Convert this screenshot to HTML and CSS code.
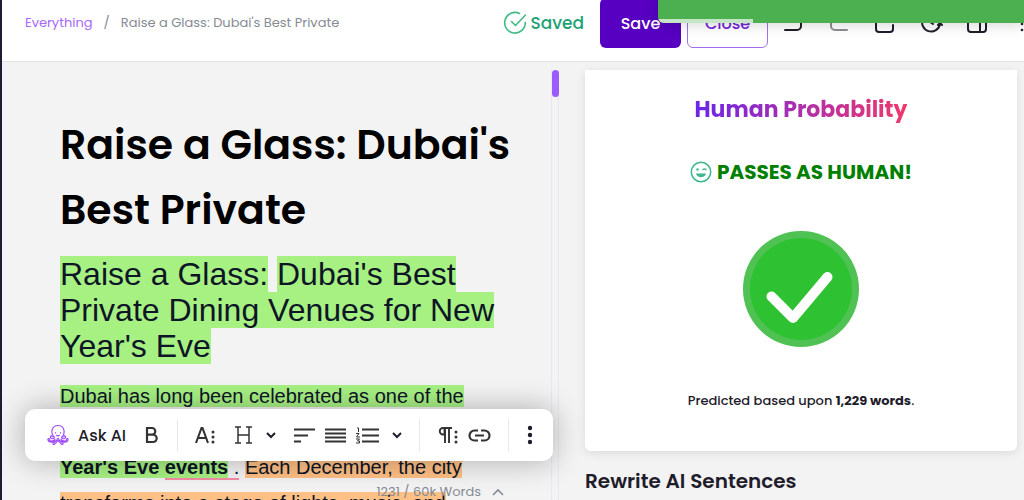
FILE: index.html
```html
<!DOCTYPE html>
<html lang="en">
<head>
    <meta charset="UTF-8">
    <meta name="viewport" content="width=device-width, initial-scale=1.0">
    <title>Raise a Glass: Dubai's Best Private</title>
    <link rel="stylesheet" href="styles.css">
</head>
<body>
    <div class="app">
        <header class="topbar">
            <nav class="breadcrumb">
                <a href="#">Everything</a>
                <span class="slash">/</span>
                <span>Raise a Glass: Dubai's Best Private</span>
            </nav>
            <div class="actions">
                <div class="saved">
                    <svg width="24" height="24" viewBox="0 0 24 24" fill="none" stroke="#3dbb83" stroke-width="1.6" stroke-linecap="round" stroke-linejoin="round">
                        <path d="M16.500 2.500A10.300 10.300 0 1 0 22.300 11.500"/>
                        <path d="M8.500 10.500l4 4L22.500 4"/>
                    </svg>
                    <span>Saved</span>
                </div>
                <button class="btn btn-save">Save</button>
                <button class="btn btn-close">Close</button>
            </div>
            <div class="tools">
                <button aria-label="Undo"><svg width="24" height="24" viewBox="0 0 24 24" class="line"><path d="M7 3L3 6l4 3M3 6h13a4 4 0 0 1 4 4v5a4 4 0 0 1-4 4H4"/></svg></button>
                <button aria-label="Redo" class="off"><svg width="24" height="24" viewBox="0 0 24 24" class="line"><path d="M17 3l4 3-4 3M21 6H8a4 4 0 0 0-4 4v5a4 4 0 0 0 4 4h12"/></svg></button>
                <button aria-label="Export"><svg width="24" height="24" viewBox="0 0 24 24" class="line"><path d="M12 8V2M9 5l3-3 3 3M3 12v6a3 3 0 0 0 3 3h11a3 3 0 0 0 3-3v-4"/></svg></button>
                <button aria-label="History"><svg width="24" height="24" viewBox="0 0 24 24" class="line"><path d="M21 13A9 9 0 1 1 17 4M11 6v5l3 2M19 14l2-2 2 2"/></svg></button>
                <button aria-label="Sidebar"><svg width="24" height="24" viewBox="0 0 24 24" class="line"><rect x="3" y="3" width="18" height="18" rx="3"/><path d="M15 3v18"/></svg></button>
                <button aria-label="More"><svg width="24" height="24" viewBox="0 0 24 24" fill="#1f1d2b"><circle cx="11" cy="5" r="1.300"/><circle cx="11" cy="13" r="1.300"/><circle cx="11" cy="19" r="1.300"/></svg></button>
            </div>
        </header>

        <main class="content">
            <section class="editor">
                <article class="document">
                    <h1>Raise a Glass: Dubai's Best Private</h1>
                    <h2><mark>Raise a Glass:</mark> <mark>Dubai's Best Private Dining Venues for New Year's Eve</mark></h2>
                    <p><mark>Dubai has long been celebrated as one of the</mark></p>
                    <p>
                        <mark><b>Year's Eve </b></mark><span class="grammar"><mark><b>events</b></mark> .</span> <mark class="orange">Each December, the city</mark><br>
                        <mark class="orange">transforms into a stage of lights, music, and</mark>
                    </p>
                </article>
                <div class="scroll"><div class="thumb"></div></div>

                <div class="word-count">
                    <span>1231 / 60k Words</span>
                    <svg width="12" height="8" viewBox="0 0 12 8" fill="none" stroke="#858b93" stroke-width="1.6"><path d="M1 7l5-5 5 5"/></svg>
                </div>

                <div class="toolbar">
                    <div class="group wide">
                        <button class="ask">
                            <svg width="22" height="22" viewBox="0 0 22 22" fill="none" stroke="#a14dfb" stroke-width="1.2" stroke-linecap="round" stroke-linejoin="round">
                                <path d="M7.500 13.500C3 9 4.500 1.500 11 1.500S19 9 14.500 13.500"/>
                                <path d="M7.500 13.500c-1 2-4.500 1.500-4-.7.300-1.300 2-1 1.700.2M14.500 13.500c1 2 4.500 1.500 4-.7-.3-1.300-2-1-1.700.2"/>
                                <path d="M8 15.500c-2 2-5.500 2-5.500 0 0-1.500-2-1-1.500.5C2 19 6 18.500 8 17M14 15.500c2 2 5.500 2 5.500 0 0-1.500 2-1 1.500.5-1 3-5 2.500-7 1"/>
                                <path d="M10.500 14.500c0 3-4 3-4.500 4.700-.3 1.500 1.500 1.700 2 .5l3-3 3 3c.500 1.200 2.300 1 2-.5-.5-1.700-4.500-1.700-4.500-4.700"/>
                                <path d="M8.500 8.500v.4M13.500 8.500v.4M9.500 11.300q1.500 1.200 3 0"/>
                            </svg>
                            <span>Ask AI</span>
                        </button>
                        <button aria-label="Bold"><svg width="14" height="18" viewBox="0 0 14 18" fill="none" stroke="#333" stroke-width="2.200"><path d="M2 2h5a3.300 3.300 0 0 1 0 6.600H2zM2 8.600h6a3.700 3.700 0 0 1 0 7.400H2z"/></svg></button>
                    </div>
                    <span class="divider"></span>
                    <div class="group wide">
                        <button aria-label="Text style"><svg width="20" height="18" viewBox="0 0 20 18" fill="none" stroke="#333" stroke-width="2.100"><path d="M1 17L6.500 2h1L13 17M3.500 12h7"/><path stroke-width="3" stroke-linecap="round" d="M18 6v0M18 11v0M18 16v0"/></svg></button>
                        <button aria-label="Heading" class="pick"><svg width="19" height="18" viewBox="0 0 19 18" fill="none" stroke="#333" stroke-width="1.500"><path d="M4 1v16M15 1v16M4 9h11M1 1h6M12 1h6M1 17h6M12 17h6"/></svg><svg width="10" height="7" viewBox="0 0 10 7" class="chevron"><path d="M1 1l4 4 4-4"/></svg></button>
                    </div>
                    <div class="group lists">
                        <button aria-label="Align"><svg width="21" height="15" viewBox="0 0 21 15" class="bars"><path d="M0 1.500h21M0 7.500h14M0 13.500h7"/></svg></button>
                        <button aria-label="Justify"><svg width="21" height="15" viewBox="0 0 21 15" class="bars"><path d="M0 1.500h21M0 5.500h21M0 9.500h21M0 13.500h21"/></svg></button>
                        <button aria-label="List" class="pick"><svg width="23" height="17" viewBox="0 0 23 17" class="bars"><path d="M6 2.500h17M6 8.500h17M6 14.500h17"/><path stroke-width="1" d="M1 1h1.500v4M0 6.500h3L.5 10H4M0 12h3.500l-2 2h2v2H0"/></svg><svg width="10" height="7" viewBox="0 0 10 7" class="chevron"><path d="M1 1l4 4 4-4"/></svg></button>
                    </div>
                    <span class="divider"></span>
                    <div class="group">
                        <button aria-label="Paragraph"><svg width="20" height="18" viewBox="0 0 20 18" fill="none" stroke="#333" stroke-width="1.900"><path d="M5 2a3.200 3.200 0 0 0 0 6.500h1.500V2z"/><path d="M5 2h9M7 2v15M11 2v15"/><path stroke-width="3" stroke-linecap="round" d="M18 6v0M18 11v0M18 16v0"/></svg></button>
                        <button aria-label="Link"><svg width="23" height="13" viewBox="0 0 23 13" fill="none" stroke="#333" stroke-width="2.200"><path d="M10 1.500H6.500a5 5 0 0 0 0 10H10M13 1.500h3.500a5 5 0 0 1 0 10H13M7 6.500h9"/></svg></button>
                    </div>
                    <span class="divider"></span>
                    <button aria-label="More options"><svg width="6" height="20" viewBox="0 0 6 20" fill="#1f1d2b"><circle cx="3" cy="3" r="2.200"/><circle cx="3" cy="10" r="2.200"/><circle cx="3" cy="17" r="2.200"/></svg></button>
                </div>
            </section>

            <aside class="panel">
                <div class="card">
                    <h3 class="card-title">Human Probability</h3>
                    <div class="result">
                        <svg width="22" height="22" viewBox="0 0 22 22" fill="none" stroke="#3bb78f" stroke-width="1.500" stroke-linecap="round">
                            <circle cx="11" cy="11" r="9.700"/>
                            <path d="M13 8.500q1.500-1.200 3 0"/>
                            <circle cx="7.500" cy="8.500" r="1.200" fill="#3bb78f" stroke="none"/>
                            <path d="M6 12.500h10c-1 5-9 5-10 0z" fill="#3bb78f" stroke="none"/>
                        </svg>
                        <span>PASSES AS HUMAN!</span>
                    </div>
                    <svg class="check" width="116" height="116" viewBox="0 0 116 116">
                        <circle cx="58" cy="58" r="58" fill="#50c153"/>
                        <circle cx="58" cy="58" r="51" fill="#2ec232"/>
                        <path d="M28.500 65.500L50 87L84.500 46" fill="none" stroke="#fff" stroke-width="10" stroke-linecap="round" stroke-linejoin="round"/>
                    </svg>
                    <p class="predicted">Predicted based upon <b>1,229 words</b>.</p>
                </div>
                <h3 class="rewrite">Rewrite AI Sentences</h3>
            </aside>
        </main>

        <div class="toast"><div class="progress"></div></div>
    </div>
</body>
</html>
```
FILE: styles.css
```css
*{
    margin: 0;
    padding: 0;
    box-sizing: border-box;
}

body{
    font-family: Poppins, Inter, sans-serif;
    color: #1f1d2b;
    background: #f3f3f3;
}

button{
    font-family: inherit;
    color: inherit;
    border: none;
    background: none;
    display: flex;
    align-items: center;
}

.app{
    position: relative;
    height: 100vh;
    overflow: hidden;
    border-left: 2px solid #211a33;
    display: flex;
    flex-direction: column;
}

.topbar{
    flex: none;
    height: 62px;
    padding: 0 0 15px 23px;
    background: #fff;
    border-bottom: 1px solid #e2e2e4;
    display: flex;
    align-items: center;
}

.breadcrumb{
    display: flex;
    flex: 1;
    font-size: 13px;
    color: #858b93;
    white-space: nowrap;
}

.breadcrumb a{
    color: #a768fb;
    text-decoration: none;
}

.slash{
    margin: 0 11px;
}

.actions{
    display: flex;
    align-items: center;
    gap: 6px;
}

.saved{
    display: flex;
    align-items: center;
    gap: 3px;
    margin-right: 10px;
    font-size: 17px;
    font-weight: 500;
    color: #20a274;
}

.btn{
    width: 81px;
    height: 50px;
    justify-content: center;
    border-radius: 6px;
    font-size: 16px;
    font-weight: 500;
}

.btn-save{
    background: #5700c2;
    color: #fff;
}

.btn-close{
    border: 1px solid #a070ee;
    color: #7526dc;
}

.tools{
    display: flex;
    gap: 22px;
    margin: 0 -11px 0 13px;
}

.off{
    opacity: 0.5;
}

.line{
    fill: none;
    stroke: #1f1d2b;
    stroke-width: 2;
    stroke-linecap: round;
    stroke-linejoin: round;
}

.content{
    flex: 1;
    min-height: 0;
    display: flex;
}

.editor{
    position: relative;
    width: 54.5%;
    display: flex;
    justify-content: space-between;
}

.document{
    flex: 1;
    padding: 50px 40px 0 58px;
}

h1{
    font-size: 41px;
    line-height: 65px;
    font-weight: 600;
    color: #000;
}

h2{
    margin-top: 14px;
    font-family: "Liberation Sans", Arial, sans-serif;
    font-size: 32px;
    line-height: 36px;
    font-weight: 400;
    color: #0d1526;
}

.document p{
    margin-top: 14px;
    font-family: "Liberation Sans", Arial, sans-serif;
    font-size: 20px;
    line-height: 36px;
    color: #0d1526;
    white-space: nowrap;
}

.document p + p{
    margin-top: 35px;
}

mark{
    background: #a7f183;
    color: inherit;
}

.orange{
    background: #ffc085;
}

.grammar{
    border-bottom: 2px solid #f58ca6;
}

.scroll{
    width: 8px;
    margin-top: 8px;
    border: 1px solid #e9e7f0;
    border-width: 0 1px;
}

.thumb{
    width: 7px;
    height: 27px;
    border-radius: 4px;
    background: #9b5cff;
}

.word-count{
    position: absolute;
    right: 55px;
    bottom: 0;
    display: flex;
    align-items: center;
    gap: 11px;
    font-size: 13px;
    line-height: 16px;
    color: #858b93;
}

.toolbar{
    position: absolute;
    left: 23px;
    right: 6px;
    bottom: 39px;
    height: 52px;
    padding: 0 20px 0 22px;
    border-radius: 10px;
    background: #fff;
    box-shadow: 0 0 30px rgba(0, 0, 0, 0.3);
    display: flex;
    align-items: center;
    justify-content: space-between;
}

.group{
    display: flex;
    align-items: center;
    gap: 10px;
}

.wide{
    gap: 19px;
}

.ask{
    gap: 9px;
    font-size: 16px;
    font-weight: 500;
}

.pick{
    gap: 13px;
}

.divider{
    width: 1px;
    height: 32px;
    background: #e8e8ea;
}

.chevron{
    fill: none;
    stroke: #1f1d2b;
    stroke-width: 2;
}

.bars{
    fill: none;
    stroke: #333;
    stroke-width: 2;
}

.panel{
    flex: 1;
    padding: 8px 7px 0 26px;
}

.card{
    height: 381px;
    padding-top: 23px;
    border-radius: 0 0 6px 6px;
    background: #fff;
    box-shadow: 0 2px 10px rgba(0, 0, 0, 0.1);
    display: flex;
    flex-direction: column;
    align-items: center;
}

.card-title{
    font-size: 22px;
    line-height: 34px;
    font-weight: 700;
    color: transparent;
    background: linear-gradient(90deg, #6a26ea, #f0386b);
    background-clip: text;
}

.result{
    margin-top: 28px;
    display: flex;
    align-items: center;
    gap: 5px;
    font-size: 20px;
    line-height: 34px;
    font-weight: 700;
    color: #008000;
}

.check{
    margin-top: 42px;
}

.predicted{
    margin-top: 44px;
    font-size: 13px;
    line-height: 20px;
    font-weight: 500;
}

.rewrite{
    margin-top: 14px;
    font-size: 20px;
    line-height: 32px;
    font-weight: 600;
}

.toast{
    position: absolute;
    top: 0;
    right: 0;
    width: 366px;
    height: 23px;
    border-radius: 0 0 0 6px;
    background: #4caf50;
    box-shadow: 0 2px 14px rgba(0, 0, 0, 0.16);
    overflow: hidden;
    display: flex;
    align-items: flex-end;
}

.progress{
    width: 26%;
    height: 4px;
    background: #c5e5c7;
}
```
